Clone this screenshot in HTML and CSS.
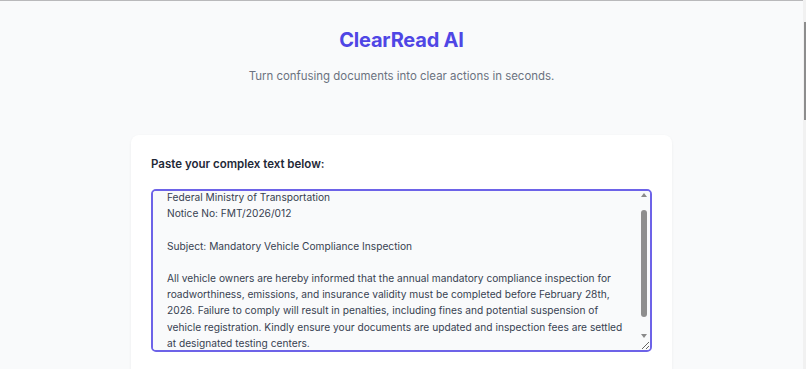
FILE: index.html
```html
<!DOCTYPE html>
<html lang="en">
<head>
<meta charset="utf-8">
<title>ClearRead AI</title>
<link rel="stylesheet" href="styles.css">
</head>
<body>
<div class="page">
  <header class="hero">
    <h1 class="title">ClearRead AI</h1>
    <p class="subtitle">Turn confusing documents into clear actions in seconds.</p>
  </header>
  <section class="card">
    <label class="label" for="doc">Paste your complex text below:</label>
    <div class="field">
      <textarea id="doc" class="input">Federal Ministry of Transportation
Notice No: FMT/2026/012

Subject: Mandatory Vehicle Compliance Inspection

All vehicle owners are hereby informed that the annual mandatory compliance inspection for roadworthiness, emissions, and insurance validity must be completed before February 28th, 2026. Failure to comply will result in penalties, including fines and potential suspension of vehicle registration. Kindly ensure your documents are updated and inspection fees are settled at designated testing centers.</textarea>
      <div class="sb" aria-hidden="true">
        <span class="sb-up"></span>
        <span class="sb-thumb"></span>
        <span class="sb-down"></span>
      </div>
    </div>
  </section>
</div>
<div class="page-scroll"><div class="page-thumb"></div></div>
<script src="script.js"></script>
</body>
</html>
```

FILE: styles.css
```css
html, body {
  margin: 0;
  padding: 0;
  height: 100%;
  overflow: hidden;
}
body {
  background: #f9fafb;
  font-family: Inter, "Noto Sans", sans-serif;
  border-top: 1px solid #b9b9bb;
  box-sizing: border-box;
}
.page {
  width: 803px;
  display: flex;
  flex-direction: column;
  align-items: center;
}
.hero {
  text-align: center;
  padding-top: 25px;
}
.title {
  margin: 0;
  font-size: 20px;
  font-weight: 700;
  color: #4f46e5;
  line-height: 28px;
  letter-spacing: -0.2px;
}
.subtitle {
  margin: 13px 0 0;
  font-size: 11.45px;
  color: #6b7280;
  line-height: 18px;
}
.card {
  margin-top: 50px;
  width: 541px;
  box-sizing: border-box;
  background: #fff;
  border-radius: 8px;
  box-shadow: 0 1px 3px rgba(0,0,0,0.06);
  padding: 20px;
  display: flex;
  flex-direction: column;
  height: 300px;
}
.label {
  font-size: 11.5px;
  font-weight: 600;
  color: #1f2937;
  line-height: 18px;
  margin-bottom: 16px;
}
.field {
  position: relative;
  width: 501px;
  height: 163px;
}
.input {
  display: block;
  width: 100%;
  height: 100%;
  box-sizing: border-box;
  border: 2px solid #6d63e8;
  border-radius: 5px;
  background: #f9fafb;
  padding: 16px 22px 16px 14px;
  font-family: Inter, "Noto Sans", sans-serif;
  font-size: 10.2px;
  line-height: 16.2px;
  color: #374151;
  outline: none;
  resize: vertical;
  scrollbar-width: none;
}
.sb {
  position: absolute;
  top: 2px;
  right: 2px;
  width: 11px;
  height: 148px;
  pointer-events: none;
}
.sb-up, .sb-down {
  position: absolute;
  left: 2px;
  width: 0;
  height: 0;
  border-left: 3.5px solid transparent;
  border-right: 3.5px solid transparent;
}
.sb-up {
  top: 2px;
  border-bottom: 4px solid #8a8a8a;
}
.sb-down {
  top: 143px;
  border-top: 4px solid #8a8a8a;
}
.sb-thumb {
  position: absolute;
  left: 2px;
  top: 19px;
  width: 6px;
  height: 107px;
  border-radius: 3px;
  background: #8e8e8e;
}
.page-scroll {
  position: fixed;
  left: 803px;
  top: 0;
  width: 15px;
  height: 100%;
  background: #f1f1f1;
}
.page-thumb {
  position: absolute;
  left: 1px;
  top: 22px;
  width: 10px;
  height: 98px;
  background: #8d8d8d;
}
```

FILE: script.js
```js
document.getElementById('doc').scrollTop = 18;
```
